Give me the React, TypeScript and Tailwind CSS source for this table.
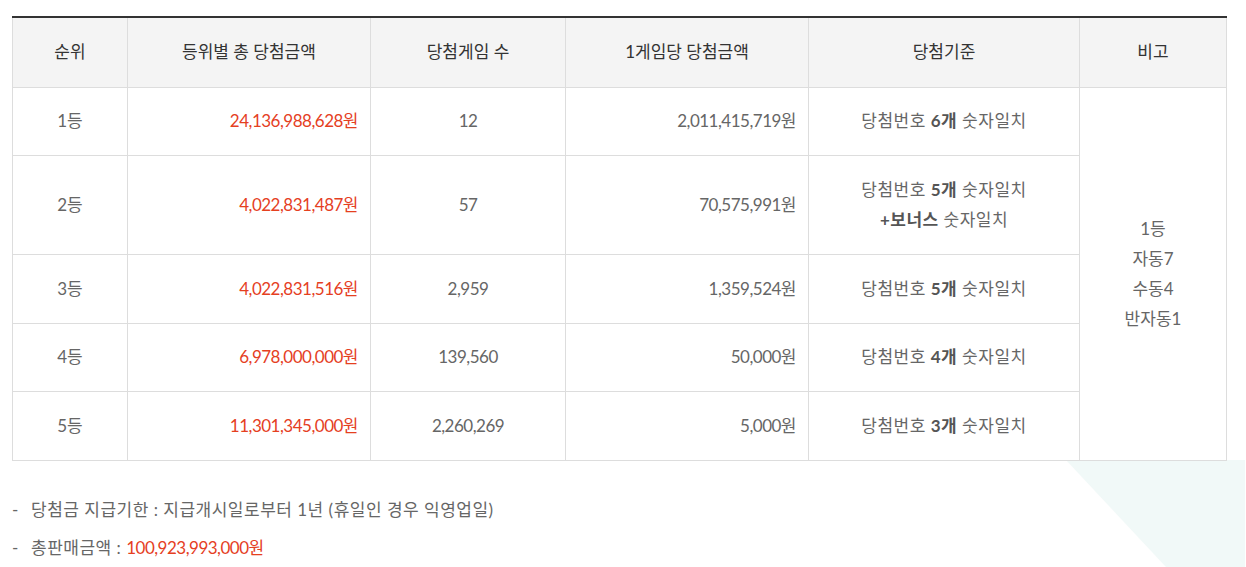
import type { ReactNode } from "react";

type Row = {
  rank: string;
  total: string;
  games: string;
  perGame: string;
  rule: ReactNode;
  h: string;
};

const FONT = { fontFamily: "Lato, 'Noto Sans CJK KR', sans-serif" };

const ROWS: Row[] = [
  {
    rank: "1등",
    total: "24,136,988,628원",
    games: "12",
    perGame: "2,011,415,719원",
    h: "h-[68px]",
    rule: (
      <>
        당첨번호 <b className="font-bold text-[#555]">6개</b> 숫자일치
      </>
    ),
  },
  {
    rank: "2등",
    total: "4,022,831,487원",
    games: "57",
    perGame: "70,575,991원",
    h: "h-[99px]",
    rule: (
      <>
        당첨번호 <b className="font-bold text-[#555]">5개</b> 숫자일치
        <br />
        <b className="font-bold text-[#555]">+보너스</b> 숫자일치
      </>
    ),
  },
  {
    rank: "3등",
    total: "4,022,831,516원",
    games: "2,959",
    perGame: "1,359,524원",
    h: "h-[69px]",
    rule: (
      <>
        당첨번호 <b className="font-bold text-[#555]">5개</b> 숫자일치
      </>
    ),
  },
  {
    rank: "4등",
    total: "6,978,000,000원",
    games: "139,560",
    perGame: "50,000원",
    h: "h-[68px]",
    rule: (
      <>
        당첨번호 <b className="font-bold text-[#555]">4개</b> 숫자일치
      </>
    ),
  },
  {
    rank: "5등",
    total: "11,301,345,000원",
    games: "2,260,269",
    perGame: "5,000원",
    h: "h-[69px]",
    rule: (
      <>
        당첨번호 <b className="font-bold text-[#555]">3개</b> 숫자일치
      </>
    ),
  },
];

const HEADERS = ["순위", "등위별 총 당첨금액", "당첨게임 수", "1게임당 당첨금액", "당첨기준", "비고"];

export default function App() {
  return (
    <div className="relative h-[567px] w-full overflow-hidden bg-white" style={FONT}>
      {/* background decoration */}
      <svg className="absolute left-0 top-0" width="1246" height="567" aria-hidden>
        <polygon points="1066,460 1245,460 1245,567 1166,567" fill="#f1f9f8" />
      </svg>

      <div className="relative pl-3 pt-4">
        <table className="w-[1215px] table-fixed border-collapse border-t-2 border-t-[#333] bg-white text-[17px] leading-[30px] text-[#666]">
          <colgroup>
            <col className="w-[115px]" />
            <col className="w-[243px]" />
            <col className="w-[195px]" />
            <col className="w-[243px]" />
            <col className="w-[271px]" />
            <col />
          </colgroup>
          <thead>
            <tr className="h-[70px] bg-[#f4f4f4]">
              {HEADERS.map((h) => (
                <th key={h} className="border border-[#ddd] font-normal text-[#333]">
                  {h}
                </th>
              ))}
            </tr>
          </thead>
          <tbody>
            {ROWS.map((row, i) => (
              <tr key={row.rank} className={row.h}>
                <td className="border border-[#ddd] text-center">{row.rank}</td>
                <td className="border border-[#ddd] pr-3 text-right tracking-[-0.5px] text-[#e5401f]">
                  {row.total}
                </td>
                <td className="border border-[#ddd] text-center tracking-[-0.5px]">{row.games}</td>
                <td className="border border-[#ddd] pr-3 text-right tracking-[-0.5px]">{row.perGame}</td>
                <td className="border border-[#ddd] text-center tracking-[0.5px]">{row.rule}</td>
                {i === 0 ? (
                  <td rowSpan={5} className="border border-[#ddd] text-center">
                    1등
                    <br />
                    자동7
                    <br />
                    수동4
                    <br />
                    반자동1
                  </td>
                ) : null}
              </tr>
            ))}
          </tbody>
        </table>

        <ul className="mt-[34px] space-y-[8px] text-[17px] leading-[30px] text-[#666]">
          <li className="flex">
            <span className="w-[19px]">-</span>
            <span className="tracking-[0.5px]">당첨금 지급기한 : 지급개시일로부터 1년 (휴일인 경우 익영업일)</span>
          </li>
          <li className="flex">
            <span className="w-[19px]">-</span>
            <span className="tracking-[0.5px]">
              총판매금액 : <span className="tracking-[-0.5px] text-[#e5401f]">100,923,993,000원</span>
            </span>
          </li>
        </ul>
      </div>
    </div>
  );
}
